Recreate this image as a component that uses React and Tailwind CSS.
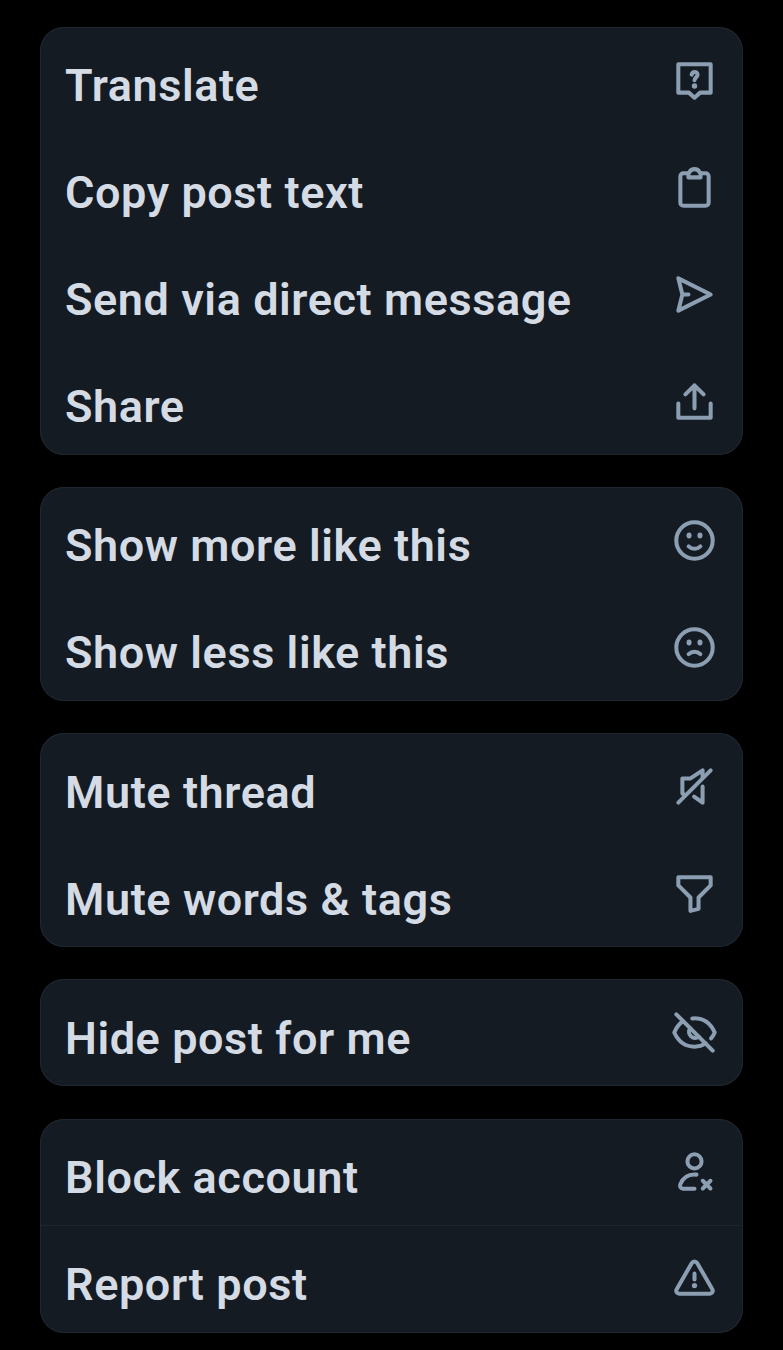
import React from "react";

const Icon = ({ children }) => (
  <svg
    className="w-[49px] h-[49px] shrink-0 text-[#8c9eb2]"
    viewBox="-0.12 -0.12 24.24 24.24"
    fill="none"
    stroke="currentColor"
    strokeWidth="2"
    strokeLinecap="round"
    strokeLinejoin="round"
    aria-hidden="true"
  >
    {children}
  </svg>
);

const TranslateIcon = () => (
  <Icon>
    <path d="M4 4h16v14h-5.2L12 20.5 9.2 18H4Z" />
    <path d="M10.6 9.1c.2-.8.7-1.3 1.5-1.3.8 0 1.4.6 1.4 1.3 0 1.2-1.5 1.5-1.5 2.8" />
    <circle cx="12" cy="14.7" r="1.35" fill="currentColor" stroke="none" />
  </Icon>
);

const ClipboardIcon = () => (
  <Icon>
    <path d="M9 5H6.5A1.5 1.5 0 0 0 5 6.5v13A1.5 1.5 0 0 0 6.5 21h11a1.5 1.5 0 0 0 1.5-1.5v-13A1.5 1.5 0 0 0 17.5 5H15" />
    <path d="M9 7V5c0-.4.3-.6.6-.7C10 3.4 10.9 2.9 12 2.9s2 .5 2.4 1.4c.3.1.6.3.6.7v2Z" />
  </Icon>
);

const SendIcon = () => (
  <Icon>
    <path d="m4 4 16 8-16 8 2-8ZM6 12h3" />
  </Icon>
);

const ShareIcon = () => (
  <Icon>
    <path d="M4 13v7h16v-7M12 15.4V4M7.5 8.5 12 4l4.5 4.5" />
  </Icon>
);

const SmileIcon = () => (
  <Icon>
    <circle cx="12" cy="12" r="9" />
    <ellipse cx="9.3" cy="9.5" rx="1.25" ry="1.5" fill="currentColor" stroke="none" />
    <ellipse cx="14.7" cy="9.5" rx="1.25" ry="1.5" fill="currentColor" stroke="none" />
    <path d="M9.1 14.9c.8.8 1.8 1.2 2.9 1.2s2.1-.4 2.9-1.2" />
  </Icon>
);

const FrownIcon = () => (
  <Icon>
    <circle cx="12" cy="12" r="9" />
    <ellipse cx="9.3" cy="9.5" rx="1.25" ry="1.5" fill="currentColor" stroke="none" />
    <ellipse cx="14.7" cy="9.5" rx="1.25" ry="1.5" fill="currentColor" stroke="none" />
    <path d="M9.1 15.3c.8-.8 1.8-1.2 2.9-1.2s2.1.4 2.9 1.2" />
  </Icon>
);

const MuteIcon = () => (
  <Icon>
    <path d="M4 20 20 4" />
    <path d="M7.5 16.2 6 15.5V8h4l6-4v3.5" />
    <path d="M16 12v8l-4.2-3" />
  </Icon>
);

const FilterIcon = () => (
  <Icon>
    <path d="M4 4h16v4l-6 6v5.6l-4 1V14L4 8Z" />
  </Icon>
);

const HideIcon = () => (
  <Icon>
    <path d="m3 3 18 18" />
    <path d="M6.3 6.4C4.4 7.7 3 9.7 2 12c2 4.4 5.6 7 10 7 2 0 3.9-.5 5.5-1.6" />
    <path d="M10.9 5.05c.4 0 .7-.05 1.1-.05 4.4 0 8 2.6 10 7-.5 1.1-1.1 2.1-1.8 2.9" />
    <path d="M9.9 9.9a3 3 0 0 0 4.2 4.2" />
  </Icon>
);

const BlockIcon = () => (
  <Icon>
    <circle cx="12" cy="6.5" r="3.5" />
    <path d="M13 13.05c-.3-.03-.7-.05-1-.05-3.5 0-6 2-7.1 5-.4 1 .4 2 1.4 2H12" />
    <path d="m16.1 16.1 3.8 3.8M19.9 16.1l-3.8 3.8" />
  </Icon>
);

const WarningIcon = () => (
  <Icon>
    <path d="M10.7 3.8 3.2 16.8c-.6 1 .1 2.2 1.3 2.2h15c1.2 0 1.9-1.2 1.3-2.2L13.3 3.8c-.6-1-2-1-2.6 0Z" />
    <path d="M12 9.1v2.9" />
    <circle cx="12" cy="15" r="1.3" fill="currentColor" stroke="none" />
  </Icon>
);

const groups = [
  [
    { label: "Translate", icon: TranslateIcon },
    { label: "Copy post text", icon: ClipboardIcon },
    { label: "Send via direct message", icon: SendIcon },
    { label: "Share", icon: ShareIcon },
  ],
  [
    { label: "Show more like this", icon: SmileIcon },
    { label: "Show less like this", icon: FrownIcon },
  ],
  [
    { label: "Mute thread", icon: MuteIcon },
    { label: "Mute words & tags", icon: FilterIcon },
  ],
  [{ label: "Hide post for me", icon: HideIcon }],
  [
    { label: "Block account", icon: BlockIcon, divider: true },
    { label: "Report post", icon: WarningIcon },
  ],
];

const MenuItem = ({ item }) => {
  const ItemIcon = item.icon;

  return (
    <button
      type="button"
      className="relative flex h-[107px] w-full items-center justify-between pl-[25px] pr-[24px] text-left"
    >
      <span className="pt-[10.5px] text-[45px] leading-none font-semibold tracking-[0.58px] whitespace-nowrap text-[#d4dbe4]">
        {item.label}
      </span>
      <ItemIcon />
      {item.divider && (
        <span className="absolute inset-x-0 bottom-0 h-px bg-[#1d2630]" />
      )}
    </button>
  );
};

const App = () => {
  return (
    <main className="flex h-[1350px] flex-col gap-[32.15px] overflow-hidden bg-black px-10 pt-[27px] font-['Roboto',sans-serif]">
      {groups.map((items) => (
        <div
          key={items[0].label}
          className="shrink-0 overflow-hidden rounded-[24px] bg-[#141b23] inset-ring inset-ring-[#20272f]"
        >
          {items.map((item) => (
            <MenuItem key={item.label} item={item} />
          ))}
        </div>
      ))}
    </main>
  );
};

export default App;
